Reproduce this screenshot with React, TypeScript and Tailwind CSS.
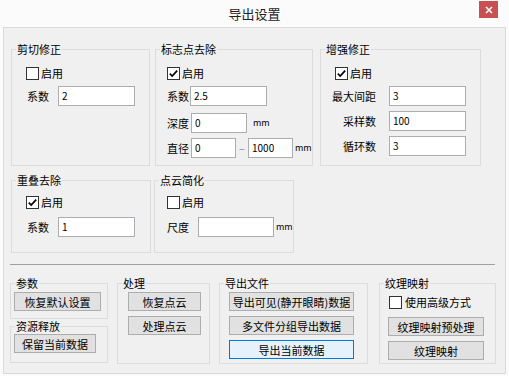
import React from "react";

const font = "font-['Noto_Sans_CJK_SC','Microsoft_YaHei',sans-serif]";

function Check({ checked }: { checked?: boolean }) {
  return (
    <span className="w-[13px] h-[13px] border border-[#333333] bg-white flex items-center justify-center shrink-0">
      {checked && (
        <svg width="11" height="11" viewBox="0 0 11 11">
          <path d="M1.8 5.6 L4.2 8 L9.2 2.6" fill="none" stroke="#000" strokeWidth="1.7" />
        </svg>
      )}
    </span>
  );
}

function Input({ value, w }: { value?: string; w: string }) {
  return (
    <div className={`${w} h-[20px] border border-[#abadb3] bg-white flex items-center pl-[3px] text-[10px] leading-[14px] text-black shrink-0`}>
      {value}
    </div>
  );
}

function Btn({ label, w, focus }: { label: string; w: string; focus?: boolean }) {
  return (
    <div
      className={`${w} h-[19px] border ${
        focus ? "border-[#0078d7] bg-[#e5f1fb]" : "border-[#adadad] bg-[#e1e1e1]"
      } flex items-center justify-center text-[11px] leading-[14px] text-black`}
    >
      {label}
    </div>
  );
}

function Group({
  title,
  cls,
  children,
}: {
  title: string;
  cls: string;
  children?: React.ReactNode;
}) {
  return (
    <fieldset className={`border border-[#dcdcdc] shrink-0 ${cls}`}>
      <legend className="ml-[4px] px-[1px] text-[11px] leading-[14px] text-black">{title}</legend>
      {children}
    </fieldset>
  );
}

export default function App() {
  return (
    <div className={`w-[509px] h-[376px] bg-[#fbfbfb] ${font} text-black overflow-hidden`}>
      {/* title bar */}
      <div className="h-[27px] grid grid-cols-[1fr_auto_1fr]">
        <div />
        <div className="text-[13px] leading-[27px] text-[#222]">导出设置</div>
        <div className="flex justify-end items-start">
          <div className="mt-[1px] mr-[11px] w-[19px] h-[17px] bg-[#c75050] flex items-center justify-center">
            <svg width="8" height="8" viewBox="0 0 8 8">
              <path d="M1 1 L7 7 M7 1 L1 7" stroke="#fff" strokeWidth="1.6" />
            </svg>
          </div>
        </div>
      </div>

      {/* body */}
      <div className="ml-[3px] w-[503px] h-[347px] border border-[#dadada] bg-[#f0f0f0] text-[11px] leading-[14px]">
        {/* row 1 */}
        <div className="mt-[14px] pl-[7px] flex">
          <Group title="剪切修正" cls="w-[139px] h-[124px]">
            <div className="mt-[10px] ml-[14px] flex items-center gap-[2px]">
              <Check />
              <span>启用</span>
            </div>
            <div className="mt-[6px] ml-[15px] flex items-center">
              <span className="w-[31px]">系数</span>
              <Input value="2" w="w-[77px]" />
            </div>
          </Group>

          <Group title="标志点去除" cls="ml-[5px] w-[158px] h-[124px]">
            <div className="mt-[10px] ml-[11px] flex items-center gap-[2px]">
              <Check checked />
              <span>启用</span>
            </div>
            <div className="mt-[6px] ml-[11px] flex items-center">
              <span className="w-[23px]">系数</span>
              <Input value="2.5" w="w-[77px]" />
            </div>
            <div className="mt-[7px] ml-[11px] flex items-center">
              <span className="w-[24px]">深度</span>
              <Input value="0" w="w-[56px]" />
              <span className="ml-[6px] text-[9px]">mm</span>
            </div>
            <div className="mt-[5px] ml-[11px] flex items-center">
              <span className="w-[24px]">直径</span>
              <Input value="0" w="w-[45px]" />
              <span className="w-[12px] text-center text-[#888]">–</span>
              <Input value="1000" w="w-[45px]" />
              <span className="ml-[2px] text-[9px]">mm</span>
            </div>
          </Group>

          <Group title="增强修正" cls="ml-[7px] w-[161px] h-[124px]">
            <div className="mt-[10px] ml-[14px] flex items-center gap-[2px]">
              <Check checked />
              <span>启用</span>
            </div>
            <div className="mt-[6px] ml-[7px] flex items-center">
              <span className="w-[48px] text-right">最大间距</span>
              <div className="ml-[13px]">
                <Input value="3" w="w-[77px]" />
              </div>
            </div>
            <div className="mt-[5px] ml-[7px] flex items-center">
              <span className="w-[48px] text-right">采样数</span>
              <div className="ml-[13px]">
                <Input value="100" w="w-[77px]" />
              </div>
            </div>
            <div className="mt-[5px] ml-[7px] flex items-center">
              <span className="w-[48px] text-right">循环数</span>
              <div className="ml-[13px]">
                <Input value="3" w="w-[77px]" />
              </div>
            </div>
          </Group>
        </div>

        {/* row 2 */}
        <div className="mt-[7px] pl-[7px] flex">
          <Group title="重叠去除" cls="w-[140px] h-[80px]">
            <div className="mt-[8px] ml-[14px] flex items-center gap-[2px]">
              <Check checked />
              <span>启用</span>
            </div>
            <div className="mt-[8px] ml-[15px] flex items-center">
              <span className="w-[31px]">系数</span>
              <Input value="1" w="w-[77px]" />
            </div>
          </Group>
          <Group title="点云简化" cls="ml-[3px] w-[140px] h-[80px]">
            <div className="mt-[8px] ml-[12px] flex items-center gap-[2px]">
              <Check />
              <span>启用</span>
            </div>
            <div className="mt-[8px] ml-[12px] flex items-center">
              <span className="w-[31px]">尺度</span>
              <Input w="w-[76px]" />
              <span className="ml-[2px] text-[9px]">mm</span>
            </div>
          </Group>
        </div>

        {/* separator */}
        <div className="mt-[11px] ml-[6px] w-[485px] h-[1px] bg-[#a0a0a0]" />

        {/* row 3 */}
        <div className="mt-[11px] pl-[6px] flex">
          <div className="flex flex-col">
            <Group title="参数" cls="w-[98px] h-[43px]">
              <div className="mt-[2px] ml-[3px]">
                <Btn label="恢复默认设置" w="w-[87px]" />
              </div>
            </Group>
            <Group title="资源释放" cls="w-[98px] h-[44px]">
              <div className="mt-[1px] ml-[3px]">
                <Btn label="保留当前数据" w="w-[82px]" />
              </div>
            </Group>
          </div>

          <Group title="处理" cls="ml-[9px] w-[93px] h-[88px]">
            <div className="mt-[2px] ml-[10px] flex flex-col gap-[5px]">
              <Btn label="恢复点云" w="w-[73px]" />
              <Btn label="处理点云" w="w-[73px]" />
            </div>
          </Group>

          <Group title="导出文件" cls="ml-[9px] w-[149px] h-[88px]">
            <div className="mt-[2px] ml-[9px] flex flex-col gap-[5px]">
              <Btn label="导出可见(静开眼睛)数据" w="w-[125px]" />
              <Btn label="多文件分组导出数据" w="w-[125px]" />
              <Btn label="导出当前数据" w="w-[125px]" focus />
            </div>
          </Group>

          <Group title="纹理映射" cls="ml-[11px] w-[117px] h-[88px]">
            <div className="mt-[5px] ml-[9px] flex items-center gap-[3px]">
              <Check />
              <span>使用高级方式</span>
            </div>
            <div className="mt-[8px] ml-[8px] flex flex-col gap-[5px]">
              <Btn label="纹理映射预处理" w="w-[96px]" />
              <Btn label="纹理映射" w="w-[96px]" />
            </div>
          </Group>
        </div>
      </div>
    </div>
  );
}
